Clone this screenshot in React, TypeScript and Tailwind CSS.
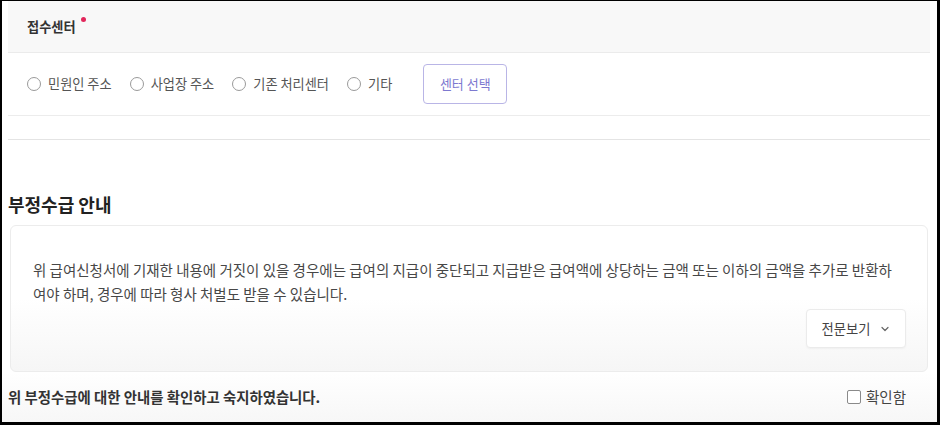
import React from "react";

const font = { fontFamily: '"Noto Sans CJK KR", "Noto Sans", sans-serif' };

function Radio({ label }: { label: string }) {
  return (
    <label className="flex items-center gap-[7px]">
      <span className="w-[14px] h-[14px] rounded-full border border-[#9a9a9a] bg-white" />
      <span className="text-[13.2px] text-[#555] leading-none">{label}</span>
    </label>
  );
}

export default function App() {
  return (
    <div
      className="w-[940px] h-[425px] bg-black pt-[1px] pl-[2px] pr-[3px] pb-[3px] overflow-hidden"
      style={font}
    >
      <div className="w-full h-full bg-white flex flex-col overflow-hidden">
        <div className="ml-[6px] mr-[7px]">
          <div className="h-[52px] bg-[#f8f8f8] border-b border-[#ebebeb] flex items-center pl-[19px]">
            <span className="text-[13.2px] font-semibold text-[#333] relative">
              접수센터
              <span className="absolute -right-[10px] top-[0px] w-[5px] h-[5px] rounded-full bg-[#e2265b]" />
            </span>
          </div>
          <div className="h-[63px] border-b border-[#ececec] flex items-center pl-[19px]">
            <div className="flex items-center gap-[18px]">
              <Radio label="민원인 주소" />
              <Radio label="사업장 주소" />
              <Radio label="기존 처리센터" />
              <Radio label="기타" />
            </div>
            <button className="ml-[31px] w-[84px] h-[40px] border-[1.5px] border-[#b9b5e6] rounded-[4px] text-[13px] text-[#7d79d0] bg-white">
              센터 선택
            </button>
          </div>
          <div className="h-[24px] border-b border-[#e4e4e4]" />
        </div>

        <h2 className="mt-[52px] pl-[6px] text-[18px] font-bold text-[#222] leading-[24px]">
          부정수급 안내
        </h2>

        <div className="mt-[9px] ml-[8px] mr-[9px] h-[147px] border border-[#ececec] rounded-[6px] bg-gradient-to-b from-white from-50% to-[#f6f6f6] px-[22px] pt-[32px] flex flex-col">
          <p className="text-[14.5px] leading-[24px] text-[#474747] break-all">
            위 급여신청서에 기재한 내용에 거짓이 있을 경우에는 급여의 지급이 중단되고 지급받은 급여액에 상당하는 금액 또는 이하의 금액을 추가로 반환하여야 하며, 경우에 따라 형사 처벌도 받을 수 있습니다.
          </p>
          <div className="flex justify-end mt-[3px] -mr-[1px]">
            <button className="w-[100px] h-[39px] border border-[#ebebeb] rounded-[4px] bg-white shadow-[0_1px_2px_rgba(0,0,0,0.04)] flex items-center justify-center gap-[10px] text-[13.3px] text-[#444]">
              전문보기
              <svg width="10" height="10" viewBox="0 0 10 10" fill="none">
                <path d="M2 3.5 L5 6.5 L8 3.5" stroke="#666" strokeWidth="1.2" strokeLinecap="round" strokeLinejoin="round" />
              </svg>
            </button>
          </div>
        </div>

        <div className="flex-1 flex items-center justify-between pl-[6px] pr-[31px] bg-gradient-to-b from-white to-[#f7f7f7]">
          <span className="text-[14.4px] font-semibold text-[#333]">
            위 부정수급에 대한 안내를 확인하고 숙지하였습니다.
          </span>
          <label className="flex items-center gap-[5px]">
            <span className="w-[14px] h-[14px] border border-[#8a8a8a] rounded-[2px] bg-white" />
            <span className="text-[14.5px] text-[#444]">확인함</span>
          </label>
        </div>
      </div>
    </div>
  );
}
